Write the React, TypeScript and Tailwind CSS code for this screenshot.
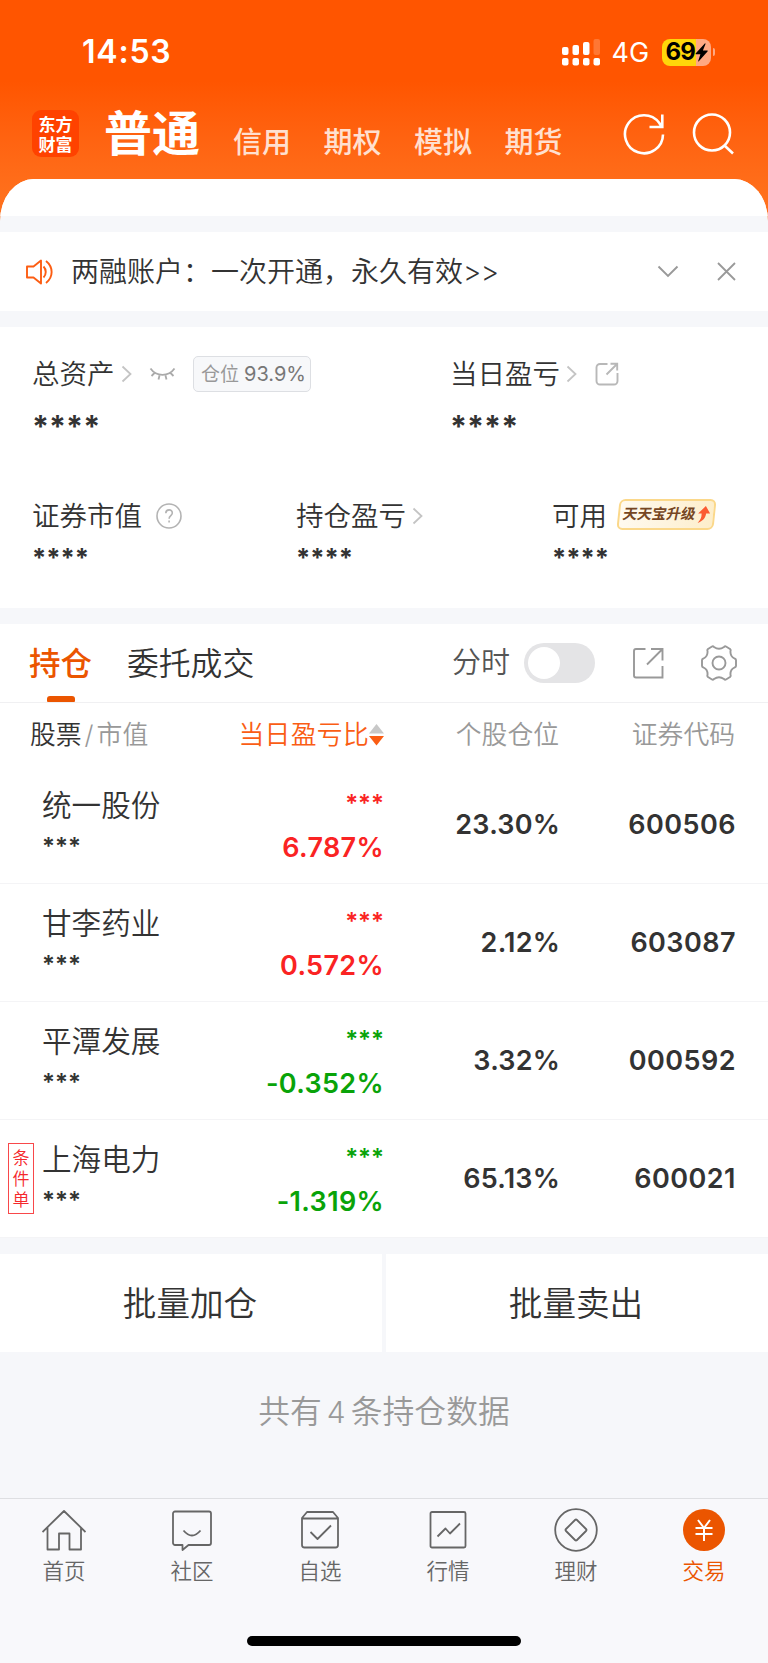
import type { ReactNode } from 'react';

type Holding = {
   name: string,
   change: string,
   position: string,
   code: string,
   up: boolean,
   hasCondition?: boolean,
}

const HOLDINGS: Holding[] = [
   { name: '统一股份', change: '6.787%', position: '23.30%', code: '600506', up: true },
   { name: '甘李药业', change: '0.572%', position: '2.12%', code: '603087', up: true },
   { name: '平潭发展', change: '-0.352%', position: '3.32%', code: '000592', up: false },
   { name: '上海电力', change: '-1.319%', position: '65.13%', code: '600021', up: false, hasCondition: true },
];

const ACCOUNT_TABS = ['信用', '期权', '模拟', '期货'];

const ChevronRight = () => (
   <svg width="12" height="18" viewBox="0 0 12 18" fill="none" stroke="#c4c4c4" strokeWidth="1.8">
      <path d="M1.500 1.500 9.500 9l-8 7.500" />
   </svg>
);

const StatusBar = () => (
   <div className="flex h-[104px] items-center pl-[82px] pr-[53px] text-white">
      <span className="flex-1 text-[32px] leading-none font-semibold tracking-[0.8px]">14:53</span>
      <svg width="40" height="28" viewBox="0 0 40 28" fill="#fff">
         <rect x="1" y="9" width="6.500" height="8" rx="2" />
         <rect x="11.500" y="7" width="6.500" height="10" rx="2" />
         <rect x="22" y="4" width="6.500" height="13" rx="2" />
         <rect x="32.500" y="1" width="6.500" height="16" rx="2" opacity="0.2" />
         <rect x="1" y="20" width="6.500" height="7.500" rx="2" />
         <rect x="11.500" y="20" width="6.500" height="7.500" rx="2" />
         <rect x="22" y="20" width="6.500" height="7.500" rx="2" />
         <rect x="32.500" y="20" width="6.500" height="7.500" rx="2" />
      </svg>
      <span className="ml-[11px] w-[39px] text-[27px] leading-none">4G</span>
      <div className="ml-[11px] flex h-[27px] w-[49px] items-center rounded-[8px] bg-linear-to-r from-[#ffd60a] from-70% to-[#ffa983] to-70% pl-[4px] text-black">
         <span className="text-[24px] leading-none font-bold tracking-[-0.8px]">69</span>
         <svg width="13" height="19" viewBox="0 0 13 19" fill="#000">
            <path d="M9.800.5.8 10.300c-.4.500-.2 1 .4 1h4.200L3.200 18c-.1.600.2.700.6.300l8.700-9.700c.4-.5.200-1-.4-1H7.900L10.500 1c.1-.6-.3-.9-.7-.5Z" />
         </svg>
      </div>
      <div className="ml-[2px] h-[8px] w-[2.500px] rounded-r-full bg-[#ffa983]" />
   </div>
);

const AccountHeader = () => (
   <div className="flex h-[75px] items-center pl-8 pr-[34px]">
      <div className="mt-[-16px] flex h-[47px] w-[47px] flex-col items-center justify-center rounded-[9px] bg-[#ff4200] font-['Noto_Sans_CJK_SC',sans-serif] text-[17px] leading-[20px] font-bold text-white">
         <span>东方</span>
         <span>财富</span>
      </div>
      <span className="ml-[25px] mt-[-16px] text-[48px] leading-none font-semibold text-white">普通</span>
      <div className="mt-[1px] ml-[33px] flex gap-[32.500px]">
         {ACCOUNT_TABS.map((tab) => (
            <span key={tab} className="text-[29px] leading-none font-medium text-[#ffe0d0]">{tab}</span>
         ))}
      </div>
      <div className="mt-[-15px] ml-auto flex items-center gap-[27px]">
         <svg width="42" height="42" viewBox="0 0 42 42" fill="none" stroke="#fff" strokeWidth="2.600">
            <path d="M40 21.500A19 19 0 1 1 36.300 10L38.500 13.500M39.300 1.500v12.500H26.500" />
         </svg>
         <svg width="42" height="42" viewBox="0 0 42 42" fill="none" stroke="#fff" strokeWidth="2.600">
            <circle cx="20" cy="19.500" r="18" />
            <path d="m32.500 32.500 8.500 8" />
         </svg>
      </div>
   </div>
);

const Notice = () => (
   <div className="flex h-[79px] items-center bg-white pl-[25px] pr-[32px]">
      <svg width="29" height="26" viewBox="0 0 29 26" fill="none" stroke="#fc5d12" strokeWidth="1.900" strokeLinejoin="round">
         <path d="M2 7.500h6.500L16 1.500v23l-7.500-6H2Z" />
         <path d="M18.500 7.500c3 3 3 8 0 11M21 2c7.500 6 7.500 16 0 22" />
      </svg>
      <span className="ml-[17px] flex-1 text-[28px] leading-none font-[350]">两融账户：一次开通，永久有效<span className="tracking-[-0.5px]">&gt;&gt;</span></span>
      <svg width="22" height="14" viewBox="0 0 22 14" fill="none" stroke="#999" strokeWidth="1.900">
         <path d="m1.500 1.500 9.500 9.500 9.500-9.500" />
      </svg>
      <svg className="ml-[38px]" width="19" height="19" viewBox="0 0 19 19" fill="none" stroke="#999" strokeWidth="1.800">
         <path d="m1 1 17 17M18 1 1 18" />
      </svg>
   </div>
);

const Assets = () => (
   <div className="h-[281px] bg-white pt-[30px] text-[27.500px] leading-[34px] font-[350]">
      <div className="flex pl-[32px]">
         <div className="w-[418px]">
            <div className="flex h-[34px] items-center">
               <span>总资产</span>
               <span className="ml-[6px]"><ChevronRight /></span>
               <svg className="ml-[16px]" width="27" height="14" viewBox="0 0 27 14" fill="none" stroke="#aaa" strokeWidth="1.800">
                  <path d="M1.500 1.500c6 8.500 18 8.500 24 0M6 5.500 2.500 9M10.500 8.500 9.500 12.500M16.500 8.500l1 4M21 5.500 24.500 9" />
               </svg>
               <div className="ml-[17px] flex h-[36px] w-[118px] items-center justify-center rounded-[5px] border border-[#dddfe3] bg-[#f7f8fa] pl-[4px] text-[19px] leading-none font-normal whitespace-nowrap text-[#999]">
                  仓位<span className="ml-[5px] text-[20px] text-[#777]">93.9%</span>
               </div>
            </div>
            <div className="mt-[18px] text-[30.500px] leading-[34px] font-bold">****</div>
         </div>
         <div>
            <div className="flex h-[34px] items-center">
               <span>当日盈亏</span>
               <span className="ml-[6px]"><ChevronRight /></span>
               <svg className="ml-[17px]" width="24" height="24" viewBox="0 0 24 24" fill="none" stroke="#b8b8b8" strokeWidth="1.900">
                  <path d="M12.500 2H5a3.500 3.500 0 0 0-3.500 3.500V19A3.500 3.500 0 0 0 5 22.500h14a3.500 3.500 0 0 0 3.500-3.500v-8M11.500 12.500 22 2M15.500 1.800h6.700v6.700" />
               </svg>
            </div>
            <div className="mt-[18px] text-[30.500px] leading-[34px] font-bold">****</div>
         </div>
      </div>
      <div className="mt-[56px] flex pl-[32px]">
         <div className="w-[264px]">
            <div className="flex h-[34px] items-center">
               <span>证券市值</span>
               <svg className="ml-[14px]" width="26" height="26" viewBox="0 0 26 26" fill="none" stroke="#b3b3b3" strokeWidth="1.600">
                  <circle cx="13" cy="13" r="12" />
                  <path d="M9.800 10.200c.1-4.400 6.600-4.400 6.500-.2 0 2.600-3.200 2.700-3.200 5.700M13.100 17.500v2" />
               </svg>
            </div>
            <div className="mt-[10px] text-[25.500px] leading-[30px] font-bold">****</div>
         </div>
         <div className="w-[256px]">
            <div className="flex h-[34px] items-center">
               <span>持仓盈亏</span>
               <span className="ml-[6px]"><ChevronRight /></span>
            </div>
            <div className="mt-[10px] text-[25.500px] leading-[30px] font-bold">****</div>
         </div>
         <div>
            <div className="flex h-[34px] items-center">
               <span>可用</span>
               <div className="mt-[-3px] ml-[11px] flex h-[31px] w-[97px] -skew-x-6 items-center justify-center gap-[3px] rounded-[6px] border-2 border-[#fbd88a] bg-linear-to-r from-[#fffaf0] to-[#fdeecb]">
                  <span className="-skew-x-6 text-[14.500px] leading-none font-bold text-[#764623]">天天宝升级</span>
                  <svg width="12" height="17" viewBox="0 0 12 17" fill="#fb5b33">
                     <path d="M7 0 0 7.500h3.500C4 11 3 14 .5 17 5.500 15 8 12 8 7.500h4Z" />
                  </svg>
               </div>
            </div>
            <div className="mt-[10px] text-[25.500px] leading-[30px] font-bold">****</div>
         </div>
      </div>
   </div>
);

const Toolbar = () => (
   <div className="flex h-[79px] border-b border-[#f0f0f2] bg-white pl-[29px] pr-[31px]">
      <div className="flex flex-col items-center text-[31.500px] leading-[80px] font-medium text-[#eb5500]">
         <span className="h-[72px]">持仓</span>
         <span className="h-[6px] w-[28px] rounded-t-[3px] rounded-b-[1px] bg-[#eb5500]" />
      </div>
      <span className="ml-[35px] text-[31.800px] leading-[80px] font-[350]">委托成交</span>
      <div className="ml-auto flex items-center">
         <span className="text-[29px] font-[350] text-[#555]">分时</span>
         <div className="ml-[14px] flex h-[40px] w-[71px] items-center rounded-full bg-[#e4e4e6] pl-[4px]">
            <div className="h-[32px] w-[32px] rounded-full bg-white" />
         </div>
         <svg className="ml-[37px]" width="32" height="32" viewBox="0 0 32 32" fill="none" stroke="#999" strokeWidth="1.900">
            <path d="M13.500 2H4a2 2 0 0 0-2 2v24.500a2 2 0 0 0 2 2h26.500V19M15 17.500 30 2.500M19 2h11.500v11.500" />
         </svg>
         <svg className="ml-[37px]" width="36" height="36" viewBox="0 0 36 36" fill="none" stroke="#999" strokeWidth="1.900" strokeLinejoin="round">
            <path d="M11 1.500Q12 1 13 2 18 5.500 23 2 24 1 25 1.500L29 4Q30 5 29.500 6 29 11.500 33.500 13.500 35 14 35 15V21Q35 22 33.500 22.500 29 24.500 29.500 30 30 31 29 32L25 34.500Q24 35 23 34 18 30.500 13 34 12 35 11 34.500L7 32Q6 31 6.500 30 7 24.500 2.500 22.500 1 22 1 21V15Q1 14 2.500 13.500 7 11.500 6.500 6 6 5 7 4Z" />
            <circle cx="18" cy="18" r="6.500" />
         </svg>
      </div>
   </div>
);

const HoldingRow = ({ name, change, position, code, up, hasCondition = false }: Holding) => (
   <div className="flex h-[118px] border-b border-[#f4f4f6] bg-white pr-[32px]">
      <div className="flex w-[42px] pt-[23px] pl-[8px]">
         {hasCondition && (
            <div className="flex h-[71px] w-[26px] flex-col items-center justify-center border border-[#f8484a] pt-[2px] text-[17px] leading-[21px] font-[350] text-[#f5282c]">
               <span>条</span>
               <span>件</span>
               <span>单</span>
            </div>
         )}
      </div>
      <div className="w-[140px] pt-[22px]">
         <div className="text-[29.600px] leading-[34px] font-[350]">{name}</div>
         <div className="mt-[11px] text-[24px] leading-[28px] font-semibold">***</div>
      </div>
      <div className={`w-[202px] pt-[24px] text-right font-semibold ${up ? 'text-[#fa2323]' : 'text-[#09a309]'}`}>
         <div className="text-[24px] leading-[28px]">***</div>
         <div className="mt-[13px] text-[27px] leading-[34px] tracking-[0.350px]">{change}</div>
      </div>
      <div className="w-[176px] text-right text-[27px] leading-[117px] font-semibold tracking-[0.200px]">{position}</div>
      <div className="w-[176px] text-right text-[27px] leading-[117px] font-semibold tracking-[0.450px]">{code}</div>
   </div>
);

const NavItem = ({ label, active = false, children }: { label: string, active?: boolean, children: ReactNode }) => (
   <div className={`flex flex-1 flex-col items-center pt-[9px] ${active ? 'text-[#eb5500]' : 'text-[#666]'}`}>
      <svg width="44" height="44" viewBox="0 0 44 44" fill="none" stroke="currentColor" strokeWidth="1.800" strokeLinejoin="round">
         {children}
      </svg>
      <span className="mt-[5px] text-[21.500px] leading-[28px] font-[350]">{label}</span>
   </div>
);

const BottomNav = () => (
   <div className="flex h-[138px] border-t border-[#dedfe2] bg-[#f8f8fb]">
      <NavItem label="首页">
         <path d="M.5 24 22 3l21.500 21M5.500 19.500v22H17v-16h10.500v16H39v-22" />
      </NavItem>
      <NavItem label="社区">
         <path d="M5 3.500h34a2 2 0 0 1 2 2V35a2 2 0 0 1-2 2H18.500L12.500 42v-5H5a2 2 0 0 1-2-2V5.500a2 2 0 0 1 2-2Z" />
         <path d="M13.500 22.500q8.500 10 17 0" />
      </NavItem>
      <NavItem label="自选">
         <path d="M9 4h26l5 6v27a2.500 2.500 0 0 1-2.500 2.500h-31A2.500 2.500 0 0 1 4 37V10ZM4 10.500h36M12.500 24l7 7L33 17.500" />
      </NavItem>
      <NavItem label="行情">
         <rect x="4.500" y="4" width="35" height="35.500" rx="1.500" />
         <path d="m11.500 28.500 8-8 4.500 5 10-10" />
      </NavItem>
      <NavItem label="理财">
         <circle cx="22" cy="22" r="20.800" />
         <path d="M21 12q1-1 2 0l9 9q1 1 0 2l-9 9q-1 1-2 0l-9-9q-1-1 0-2Z" />
      </NavItem>
      <NavItem label="交易" active>
         <circle cx="22" cy="22" r="21" fill="currentColor" stroke="none" />
         <path d="m16 12 6 8 6-8M22 20v13M13.500 20h17M13.500 26h17" stroke="#fff" strokeWidth="2" />
      </NavItem>
   </div>
);

const App = () => (
   <div className="h-[1663px] w-[768px] overflow-hidden bg-[#f6f7fa] font-[Inter,'Noto_Sans_CJK_SC',sans-serif] text-[#333]">
      <div className="h-[232px] bg-linear-to-b from-[#ff5500] from-35% to-[#ff701c] to-85%">
         <StatusBar />
         <AccountHeader />
         <div className="h-[53px] overflow-hidden rounded-t-[34px_42px] bg-[#f6f7fa]">
            <div className="h-[37px] bg-white" />
         </div>
      </div>
      <Notice />
      <div className="h-4" />
      <Assets />
      <div className="h-4" />
      <Toolbar />
      <div className="flex h-[63px] bg-white pl-[30px] pr-[33px] text-[25.800px] leading-[63px] font-[350] text-[#999]">
         <div className="w-[208px]"><span className="text-[#333]">股票</span><span className="mx-[3px]">/</span>市值</div>
         <div className="flex w-[146px] items-center justify-end text-[#fa5d14]">
            <span className="tracking-[0.300px] whitespace-nowrap">当日盈亏比</span>
            <svg width="15" height="22" viewBox="0 0 15 22">
               <path d="M7.500 0 15 9.500H0Z" fill="#c8c8c8" />
               <path d="M7.500 21.500 15 12H0Z" fill="#fa5d14" />
            </svg>
         </div>
         <div className="w-[175px] text-right">个股仓位</div>
         <div className="w-[176px] text-right">证券代码</div>
      </div>
      {HOLDINGS.map((item) => <HoldingRow key={item.code} {...item} />)}
      <div className="mt-[16px] flex h-[98px] gap-1 text-center text-[33.600px] leading-[99px]">
         <button className="flex-1 bg-white pr-[2px] font-[350]">批量加仓</button>
         <button className="flex-1 bg-white pr-[2px] font-[350]">批量卖出</button>
      </div>
      <div className="h-[146px] text-center text-[31.800px] leading-[120px] font-[350] text-[#999]">
         共有<span className="mr-[5px] ml-[5px] text-[30px]">4</span>条持仓数据
      </div>
      <BottomNav />
      <div className="flex h-[27px] justify-center bg-[#f8f8fb]">
         <div className="h-[10px] w-[274px] rounded-full bg-black" />
      </div>
   </div>
);

export default App;
